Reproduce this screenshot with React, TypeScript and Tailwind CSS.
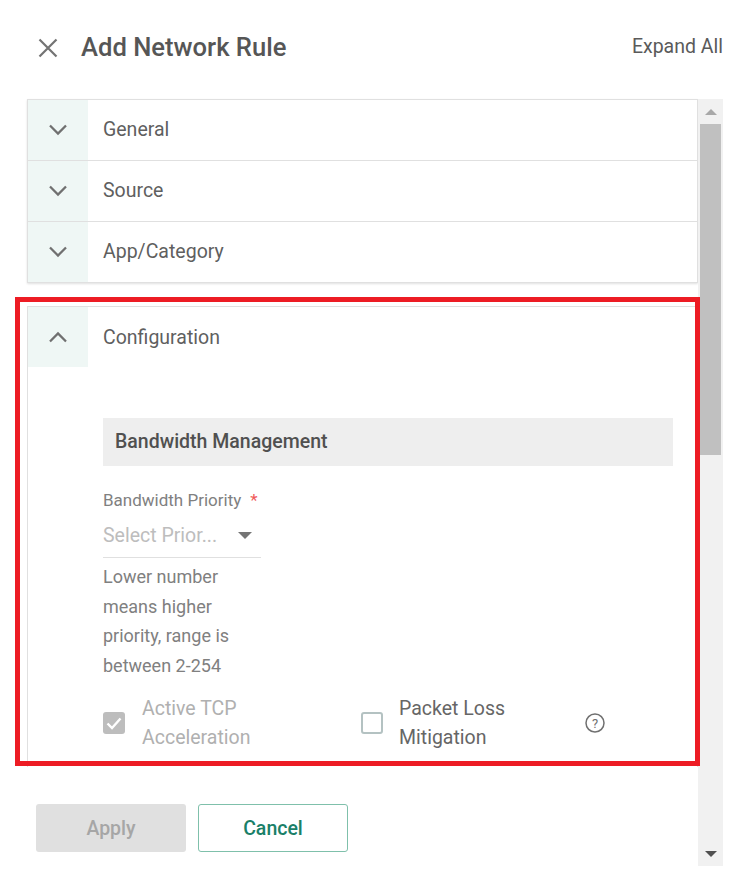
import React from 'react';

const font = { fontFamily: 'Roboto, sans-serif' };

const Chevron = ({ up = false }: { up?: boolean }) => (
  <svg width="20" height="12" viewBox="0 0 20 12" fill="none" stroke="#707070" strokeWidth="2.3">
    <path d={up ? 'M2 10.5 L10 2.5 L18 10.5' : 'M2 1.5 L10 9.5 L18 1.5'} />
  </svg>
);

const AccordionRow = ({ label, up = false, last = false }: { label: string; up?: boolean; last?: boolean }) => (
  <div className={`flex items-stretch ${last ? 'h-[60px]' : 'h-[61px] border-b border-[#e0e0e0]'}`}>
    <div className="flex w-[60px] shrink-0 items-center justify-center bg-[#eff7f5]">
      <Chevron up={up} />
    </div>
    <div className={`flex items-center pl-[15px] text-[19.5px] text-[#5f5f5f] ${up ? 'pt-[2px]' : ''}`}>{label}</div>
  </div>
);

export default function App() {
  return (
    <div className="relative h-[878px] w-[736px] overflow-hidden bg-white" style={font}>
      <header className="flex h-[99px] items-start pt-[28px] pr-[13px] pl-[38px]">
        <svg width="20" height="20" viewBox="0 0 20 20" className="mt-[10px]" stroke="#737373" strokeWidth="2.2">
          <path d="M1.5 1.5 L18.5 18.5 M18.5 1.5 L1.5 18.5" />
        </svg>
        <h1 className="ml-[23px] text-[25.6px] leading-[38px] font-medium text-[#565656]">Add Network Rule</h1>
        <button className="ml-auto text-[19.5px] leading-[37px] text-[#5a5a5a]">Expand All</button>
      </header>

      <div className="flex">
        <div className="w-[698px]">
          <div className="ml-[27px] h-[184px] border border-[#e0e0e0] shadow-[0_1px_2px_rgba(0,0,0,0.12)]">
            <AccordionRow label="General" />
            <AccordionRow label="Source" />
            <AccordionRow label="App/Category" last />
          </div>

          <div className="mt-[23px] ml-[27px] h-[461px] overflow-hidden border-x border-t border-[#e0e0e0]">
            <AccordionRow label="Configuration" up last />
            <div className="pt-[51px] pr-[24px] pl-[75px]">
              <div className="flex h-[48px] items-center bg-[#eeeeee] pl-[12px] text-[19.5px] font-medium text-[#505050]">
                Bandwidth Management
              </div>
              <label className="mt-[23px] block text-[17px] leading-[22px] text-[#808080]">
                Bandwidth Priority<span className="ml-[9px] text-[#f05a5a]">*</span>
              </label>
              <div className="flex h-[47px] w-[158px] items-center border-b border-[#e0e0e0] pt-[3px]">
                <span className="text-[19.5px] text-[#bdbdbd]">Select Prior...</span>
                <span className="ml-auto mr-[9px] h-0 w-0 border-x-[7px] border-t-[7px] border-x-transparent border-t-[#757575]" />
              </div>
              <p className="mt-[4px] w-[140px] text-[18px] leading-[29.5px] text-[#808080]">
                Lower number means higher priority, range is between 2-254
              </p>
              <div className="mt-[14px] flex items-center">
                <span className="flex h-[22px] w-[22px] items-center justify-center rounded-[3px] bg-[#bdbdbd]">
                  <svg width="16" height="13" viewBox="0 0 16 13" fill="none" stroke="#ffffff" strokeWidth="2.4">
                    <path d="M1.5 6.5 L6 11 L14.5 1.5" />
                  </svg>
                </span>
                <span className="ml-[17px] w-[219px] text-[19.5px] leading-[29px] text-[#b0b0b0]">
                  Active TCP
                  <br />
                  Acceleration
                </span>
                <span className="h-[22px] w-[22px] rounded-[3px] border-2 border-[#b4c2c2]" />
                <span className="ml-[16px] w-[186px] text-[19.5px] leading-[29px] text-[#666666]">
                  Packet Loss
                  <br />
                  Mitigation
                </span>
                <svg width="20" height="20" viewBox="0 0 20 20" fill="none">
                  <circle cx="10" cy="10" r="9" stroke="#707070" strokeWidth="1.5" />
                  <text x="10" y="14.5" textAnchor="middle" fontSize="13" fill="#707070" fontFamily="Roboto, sans-serif">?</text>
                </svg>
              </div>
            </div>
          </div>

          <div className="mt-[37px] flex gap-[12px] pl-[36px]">
            <button className="h-[48px] w-[150px] rounded-[3px] bg-[#e0e0e0] pt-px text-[19.5px] font-medium text-[#a6a6a6]">Apply</button>
            <button className="h-[48px] w-[150px] rounded-[3px] border border-[#7fc0ab] pt-px text-[19.5px] font-medium text-[#1a8068]">Cancel</button>
          </div>
        </div>

        <div className="flex h-[767px] w-[25px] flex-col items-center bg-[#f1f1f1]">
          <div className="flex h-[25px] items-center">
            <span className="h-0 w-0 border-x-[6px] border-b-[6px] border-x-transparent border-b-[#a8a8a8]" />
          </div>
          <div className="h-[331px] w-[21px] bg-[#c0c0c0]" />
          <div className="mt-auto flex h-[25px] items-center">
            <span className="h-0 w-0 border-x-[6px] border-t-[6px] border-x-transparent border-t-[#505050]" />
          </div>
        </div>
      </div>

      {/* highlight annotation */}
      <div className="pointer-events-none absolute top-[297px] left-[15px] h-[469px] w-[685px] border-[5px] border-[#ed1c24]" />
    </div>
  );
}
